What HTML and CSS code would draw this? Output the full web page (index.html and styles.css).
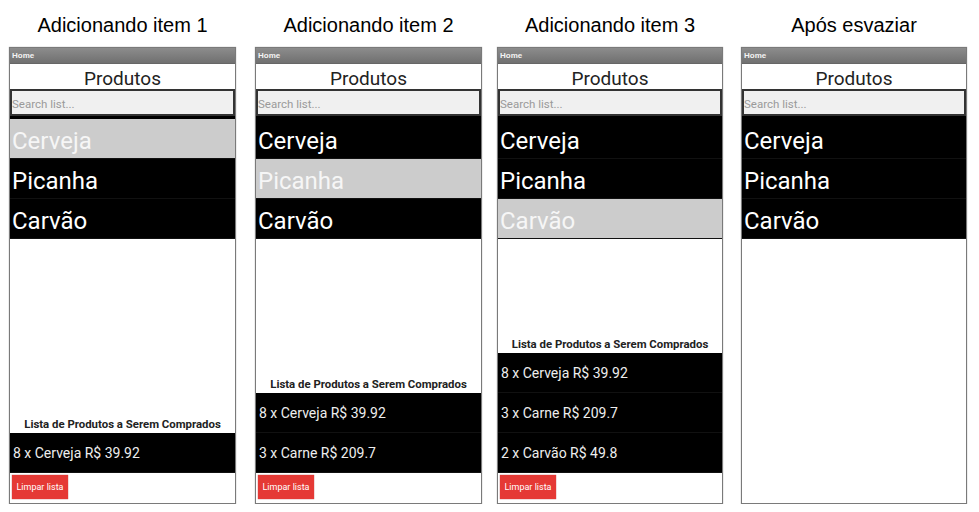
FILE: index.html
```html
<!DOCTYPE html>
<html lang="pt">
<head>
<meta charset="utf-8">
<link rel="stylesheet" href="styles.css">
</head>
<body>
<div class="board">
  <div class="col c1">
    <div class="caption">Adicionando item 1</div>
    <div class="phone">
      <div class="topbar">Home</div>
      <div class="heading">Produtos</div>
      <div class="search">Search list...</div>
      <div class="list">
        <div class="item sel">Cerveja</div>
        <div class="item">Picanha</div>
        <div class="item">Carvão</div>
      </div>
      <div class="cart">
        <div class="cart-title">Lista de Produtos a Serem Comprados</div>
        <div class="cart-row">8 x Cerveja R$ 39.92</div>
        <div class="actions"><button class="clear">Limpar lista</button></div>
      </div>
    </div>
  </div>
  <div class="col c2">
    <div class="caption">Adicionando item 2</div>
    <div class="phone">
      <div class="topbar">Home</div>
      <div class="heading">Produtos</div>
      <div class="search">Search list...</div>
      <div class="list">
        <div class="item">Cerveja</div>
        <div class="item sel">Picanha</div>
        <div class="item">Carvão</div>
      </div>
      <div class="cart">
        <div class="cart-title">Lista de Produtos a Serem Comprados</div>
        <div class="cart-row">8 x Cerveja R$ 39.92</div>
        <div class="cart-row">3 x Carne R$ 209.7</div>
        <div class="actions"><button class="clear">Limpar lista</button></div>
      </div>
    </div>
  </div>
  <div class="col c3">
    <div class="caption">Adicionando item 3</div>
    <div class="phone">
      <div class="topbar">Home</div>
      <div class="heading">Produtos</div>
      <div class="search">Search list...</div>
      <div class="list">
        <div class="item">Cerveja</div>
        <div class="item">Picanha</div>
        <div class="item sel">Carvão</div>
      </div>
      <div class="cart">
        <div class="cart-title">Lista de Produtos a Serem Comprados</div>
        <div class="cart-row">8 x Cerveja R$ 39.92</div>
        <div class="cart-row">3 x Carne R$ 209.7</div>
        <div class="cart-row">2 x Carvão R$ 49.8</div>
        <div class="actions"><button class="clear">Limpar lista</button></div>
      </div>
    </div>
  </div>
  <div class="col c4">
    <div class="caption">Após esvaziar</div>
    <div class="phone">
      <div class="topbar">Home</div>
      <div class="heading">Produtos</div>
      <div class="search">Search list...</div>
      <div class="list">
        <div class="item">Cerveja</div>
        <div class="item">Picanha</div>
        <div class="item">Carvão</div>
      </div>
    </div>
  </div>
</div>
</body>
</html>
```
FILE: styles.css
```css
html, body { margin: 0; padding: 0; background: #fff; }
body { font-family: Roboto, "Liberation Sans", sans-serif; }
.board { display: flex; align-items: flex-start; padding-left: 9px; }
.col { width: 227px; display: flex; flex-direction: column; }
.c2 { margin-left: 19px; }
.c3 { margin-left: 15px; width: 226px; }
.c4 { margin-left: 18px; width: 226px; }
.caption {
  font-family: "Liberation Sans", Arial, sans-serif;
  font-size: 20px;
  color: #000;
  text-align: center;
  height: 47px;
  line-height: 50px;
  white-space: nowrap;
}
.phone {
  height: 457px;
  box-sizing: border-box;
  border: 1px solid #7a7a7a;
  box-shadow: 0 0 1px #999;
  display: flex;
  flex-direction: column;
  background: #fff;
}
.topbar {
  height: 15px;
  background: linear-gradient(#8c8c8c, #707070);
  color: #f4f4f4;
  font-family: "Liberation Sans", Arial, sans-serif;
  font-weight: bold;
  font-size: 8px;
  line-height: 16px;
  padding-left: 2px;
  border-bottom: 1px solid #666;
}
.heading {
  height: 25px;
  line-height: 29px;
  text-align: center;
  font-size: 19px;
  color: #222;
}
.search {
  height: 27px;
  box-sizing: border-box;
  border: 2px solid #333;
  background: #f0f0f0;
  color: #9a9a9a;
  font-size: 11.5px;
  line-height: 27px;
  padding-left: 0;
}
.list { background: #000; padding-top: 3px; }
.c2 .list, .c3 .list, .c4 .list { padding-top: 0; }
.c2 .list .item:first-child, .c3 .list .item:first-child, .c4 .list .item:first-child { height: 43px; line-height: 50px; }
.item {
  height: 40px;
  line-height: 45px;
  font-size: 24px;
  color: #fff;
  padding-left: 2px;
  border-bottom: 1px solid #111;
  box-sizing: border-box;
}
.item.sel { background: #cccccc; color: #f6f6f6; }
.cart { margin-top: auto; display: flex; flex-direction: column; }
.cart-title {
  font-size: 11.4px;
  font-weight: bold;
  color: #222;
  text-align: center;
  height: 15px;
  line-height: 13px;
  white-space: nowrap;
}
.cart-row {
  height: 40px;
  line-height: 41px;
  background: #000;
  color: #eee;
  font-size: 14px;
  padding-left: 3px;
  border-bottom: 1px solid #111;
  box-sizing: border-box;
}
.cart-row:last-of-type { border-bottom: 1px solid #ccc; }
.actions { height: 30px; padding: 2px 0 0 2px; box-sizing: border-box; }
.clear {
  border: none;
  background: #e53935;
  color: #fff;
  font-family: Roboto, "Liberation Sans", sans-serif;
  font-size: 9px;
  height: 24px;
  width: 56px;
  padding: 0;
  box-shadow: 0 0 1px #a33;
}
```
